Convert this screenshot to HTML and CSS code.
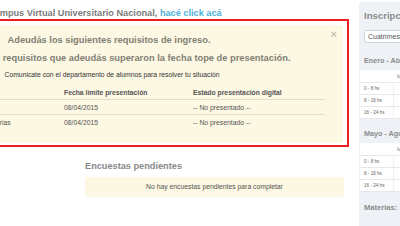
FILE: index.html
```html
<!DOCTYPE html>
<html lang="es">
<head>
<meta charset="utf-8">
<title>Campus</title>
<link rel="stylesheet" href="styles.css">
</head>
<body>
<div class="page">
  <main class="main">
    <p class="notice">Para acceder al Campus Virtual Universitario Nacional, <a href="#" class="link">hacé click acá</a></p>
    <div class="highlight">
      <div class="alert">
        <span class="close">×</span>
        <h3 class="alert-title">Adeudás los siguientes requisitos de ingreso.</h3>
        <h3 class="alert-title">Algunos de los requisitos que adeudás superaron la fecha tope de presentación.</h3>
        <p class="alert-text">Comunicate con el departamento de alumnos para resolver tu situación</p>
        <table class="req-table">
          <thead>
            <tr><th class="c1">Requisito</th><th class="c2">Fecha límite presentación</th><th class="c3">Estado presentación digital</th></tr>
          </thead>
          <tbody>
            <tr><td class="c1">Fotocopia del DNI</td><td class="c2">08/04/2015</td><td class="c3">-- No presentado --</td></tr>
            <tr><td class="c1">Certificado analítico de las materias</td><td class="c2">08/04/2015</td><td class="c3">-- No presentado --</td></tr>
          </tbody>
        </table>
      </div>
    </div>
    <div class="lower">
      <div class="lower-left"></div>
      <section class="surveys">
        <h3 class="section-title">Encuestas pendientes</h3>
        <div class="empty-box">No hay encuestas pendientes para completar</div>
      </section>
    </div>
  </main>
  <aside class="sidebar">
    <h4 class="side-title">Inscripciones</h4>
    <div class="select">Cuatrimestre actual</div>
    <h5 class="period">Enero - Abril</h5>
    <table class="sched">
      <thead><tr><th class="lab"></th><th>lu</th><th>ma</th><th>mi</th><th>ju</th><th>vi</th><th>sá</th></tr></thead>
      <tbody>
        <tr><td class="lab">0 - 8 hs</td><td></td><td></td><td></td><td></td><td></td><td></td></tr>
        <tr><td class="lab">8 - 16 hs</td><td></td><td></td><td></td><td></td><td></td><td></td></tr>
        <tr><td class="lab">16 - 24 hs</td><td></td><td></td><td></td><td></td><td></td><td></td></tr>
      </tbody>
    </table>
    <h5 class="period period-2">Mayo - Agosto</h5>
    <table class="sched">
      <thead><tr><th class="lab"></th><th>lu</th><th>ma</th><th>mi</th><th>ju</th><th>vi</th><th>sá</th></tr></thead>
      <tbody>
        <tr><td class="lab">0 - 8 hs</td><td></td><td></td><td></td><td></td><td></td><td></td></tr>
        <tr><td class="lab">8 - 16 hs</td><td></td><td></td><td></td><td></td><td></td><td></td></tr>
        <tr><td class="lab">16 - 24 hs</td><td></td><td></td><td></td><td></td><td></td><td></td></tr>
      </tbody>
    </table>
    <h5 class="materias">Materias:</h5>
  </aside>
</div>
</body>
</html>
```
FILE: styles.css
```css
html, body {
  margin: 0;
  padding: 0;
  background: #ffffff;
  overflow: hidden;
  width: 400px;
  height: 226px;
}
body {
  font-family: "Liberation Sans", Arial, sans-serif;
  color: #444;
}
.page {
  display: flex;
  align-items: flex-start;
  margin-left: -125px;
  gap: 10px;
  width: 700px;
}
.main {
  width: 474px;
  flex: none;
}
.notice {
  margin: 7px 0 0 0;
  padding-left: 43px;
  font-size: 9.2px;
  line-height: 12px;
  font-weight: bold;
  color: #7c7c7c;
  white-space: nowrap;
}
.link {
  color: #4db2da;
  text-decoration: none;
}
.highlight {
  margin-top: 0;
  border: 2px solid #ee1c25;
  padding: 4px 4px 2px 4px;
}
.alert {
  position: relative;
  background: #fcf8e3;
  border-radius: 3px;
  padding: 6px 18px 14px 18px;
  text-align: center;
}
.close {
  position: absolute;
  right: 6px;
  top: 3px;
  font-size: 11px;
  line-height: 12px;
  color: #c9c5b5;
  font-weight: bold;
}
.alert-title {
  margin: 0;
  font-size: 9.3px;
  line-height: 18px;
  font-weight: bold;
  color: #817f74;
  white-space: nowrap;
}
.alert-title:first-of-type {
  padding-right: 6px;
}
.alert-text {
  margin: 3px 0 0 0;
  font-size: 6.8px;
  line-height: 10px;
  color: #333;
}
.req-table {
  margin-top: 5px;
  width: 426px;
  border-collapse: collapse;
  text-align: left;
  font-size: 6.8px;
  color: #555;
}
.req-table th {
  height: 14px;
  padding: 0 4px;
  font-weight: bold;
  color: #555;
  border-bottom: 1px solid #e4dfc8;
  white-space: nowrap;
}
.req-table td {
  height: 14px;
  padding: 0 4px;
  white-space: nowrap;
}
.req-table tbody tr:first-child td {
  border-bottom: 1px solid #e4dfc8;
}
.req-table .c1 { width: 153px; }
.req-table .c2 { width: 121px; }
.lower {
  display: grid;
  grid-template-columns: 1fr 259px;
  padding-right: 5px;
}
.surveys {
  padding-top: 11px;
}
.section-title {
  margin: 0;
  font-size: 9.2px;
  line-height: 16px;
  font-weight: bold;
  color: #8a8a8a;
}
.empty-box {
  margin-top: 3px;
  height: 20px;
  line-height: 20px;
  background: #fcf8e3;
  border-radius: 3px;
  text-align: center;
  font-size: 6.8px;
  color: #555;
}
.sidebar {
  flex: none;
  width: 200px;
  height: 240px;
  margin-top: 2px;
  background: #eef2f6;
  border-radius: 4px;
  padding: 6px 5px 0 5px;
  box-sizing: border-box;
}
.side-title {
  margin: 0;
  font-size: 9.6px;
  line-height: 16px;
  font-weight: bold;
  color: #8c8c8c;
  white-space: nowrap;
}
.select {
  margin-top: 6px;
  height: 13px;
  box-sizing: border-box;
  background: #fff;
  border: 1px solid #cfd3d7;
  border-radius: 2px;
  padding-left: 3px;
  font-size: 7px;
  line-height: 11px;
  color: #555;
  white-space: nowrap;
}
.period {
  margin: 12px 0 0 0;
  font-size: 7.2px;
  line-height: 12px;
  font-weight: bold;
  color: #8c8c8c;
  white-space: nowrap;
}
.period-2 {
  margin-top: 9px;
}
.sched {
  margin-top: 3px;
  margin-left: -4px;
  border-collapse: collapse;
  background: #fff;
  font-size: 4.6px;
  color: #666;
}
.sched th {
  height: 12px;
  padding: 0 4px;
  font-weight: normal;
  text-align: left;
  border-bottom: 1px solid #e6e9ec;
  width: 22px;
}
.sched td {
  height: 11px;
  padding: 0;
  border-bottom: 1px solid #e6e9ec;
  border-left: 1px solid #eef0f2;
}
.sched .lab {
  width: 27px;
  padding-left: 4px;
  text-align: left;
  border-left: none;
  white-space: nowrap;
}
.materias {
  margin: 10px 0 0 0;
  font-size: 7.6px;
  line-height: 12px;
  font-weight: bold;
  color: #8c8c8c;
}
```
